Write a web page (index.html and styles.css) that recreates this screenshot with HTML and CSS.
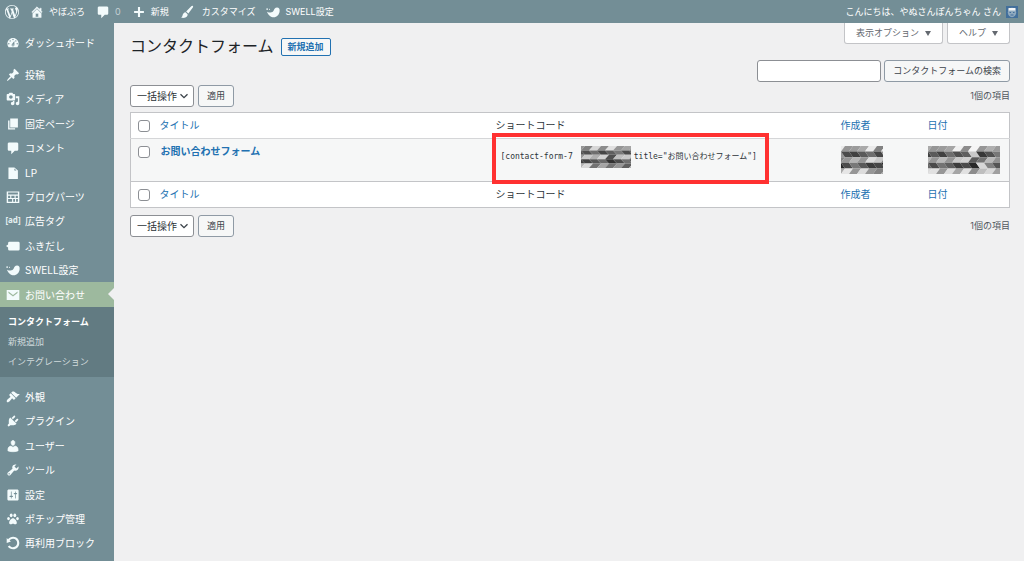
FILE: index.html
```html
<!DOCTYPE html>
<html lang="ja">
<head>
<meta charset="utf-8">
<title>コンタクトフォーム</title>
<link rel="stylesheet" href="styles.css">
</head>
<body>
<svg class="sprite" aria-hidden="true">
  <symbol id="i-wp" viewBox="0 0 20 20"><path d="M20 10c0-5.51-4.49-10-10-10C4.48 0 0 4.49 0 10c0 5.52 4.48 10 10 10 5.51 0 10-4.48 10-10zM7.78 15.37L4.37 6.22c.55-.02 1.17-.08 1.17-.08.5-.06.44-1.13-.06-1.11 0 0-1.45.11-2.37.11-.18 0-.37 0-.58-.01C4.12 2.69 6.87 1.11 10 1.11c2.33 0 4.45.87 6.05 2.34-.68-.11-1.65.39-1.65 1.58 0 .74.45 1.36.9 2.1.35.61.55 1.36.55 2.46 0 1.49-1.4 5-1.4 5l-3.03-8.37c.54-.02.82-.17.82-.17.5-.05.44-1.25-.06-1.22 0 0-1.44.12-2.38.12-.87 0-2.33-.12-2.33-.12-.5-.03-.56 1.2-.06 1.22l.92.08 1.26 3.41zM17.41 10c.24-.64.74-1.87.43-4.25.7 1.29 1.05 2.71 1.05 4.25 0 3.29-1.73 6.24-4.4 7.78.97-2.59 1.94-5.2 2.92-7.78zM6.1 18.09C3.12 16.65 1.11 13.53 1.11 10c0-1.3.23-2.48.72-3.59C3.25 10.3 4.67 14.2 6.1 18.09zm4.03-6.63l2.58 6.98c-.86.29-1.76.45-2.71.45-.79 0-1.57-.11-2.29-.33.81-2.38 1.62-4.74 2.42-7.1z"/></symbol>
  <symbol id="i-home" viewBox="0 0 20 20"><path d="M16 8.5l1.53 1.53-1.06 1.06L10 4.6l-6.47 6.49-1.06-1.06L10 2.5l4 4v-2h2v4zm-6-2.46l6 5.99V18H4v-5.97zM12 17v-5H8v5h4z" stroke="#f3fbfc" stroke-width=".6"/></symbol>
  <symbol id="i-comment" viewBox="0 0 20 20"><path d="M4.500 2h11c1.100 0 2 .9 2 2v8c0 1.100-.9 2-2 2h-3l-5 5v-5h-3c-1.100 0-2-.9-2-2V4c0-1.100.9-2 2-2z"/></symbol>
  <symbol id="i-plus" viewBox="0 0 20 20"><path d="M17 8.500v3h-5.500V17h-3v-5.500H3v-3h5.500V3h3v5.500z"/></symbol>
  <symbol id="i-brush" viewBox="0 0 20 20"><path d="M18.300 1.400c.7.600.5 1.500 0 2.300l-6.300 8.500-3.200-2.900 7.300-7.500c.7-.7 1.500-1 2.200-.4zM7.900 10.300l3 2.800c.2 2.300-1.500 4.600-4.300 5.200-1.900.4-3.700.2-5.100-.5 1.600-.7 1.900-1.700 2.300-3.400.5-2.100 2-3.800 4.100-4.100z"/></symbol>
  <symbol id="i-swell" viewBox="0 0 20 20"><path d="M1.500 9.500c4 2 8.500 1.500 9.500-1.500.7-2.500 2-4.500 4.800-4.500 2.700 0 4 2 3.700 5C19 14 15.500 17.500 11 17.500c-4 0-8-3.500-9.500-8z"/><circle cx="1.600" cy="5.800" r="1.200"/><circle cx="5" cy="6" r=".8"/></symbol>
  <symbol id="i-dash" viewBox="0 0 20 20"><path d="M3.760 16h12.480c1.100-1.370 1.760-3.110 1.760-5 0-4.420-3.580-8-8-8s-8 3.580-8 8c0 1.890.660 3.630 1.760 5zM10 4c.55 0 1 .45 1 1s-.45 1-1 1-1-.45-1-1 .45-1 1-1zM6 6c.55 0 1 .45 1 1s-.45 1-1 1-1-.45-1-1 .45-1 1-1zm8 0c.55 0 1 .45 1 1s-.45 1-1 1-1-.45-1-1 .45-1 1-1zm-5.370 5.550L12 7v6c0 1.100-.9 2-2 2s-2-.9-2-2c0-.57.24-1.080.63-1.450zM4 10c.55 0 1 .45 1 1s-.45 1-1 1-1-.45-1-1 .45-1 1-1zm12 0c.55 0 1 .45 1 1s-.45 1-1 1-1-.45-1-1 .45-1 1-1zm-5 3c0-.55-.45-1-1-1s-1 .45-1 1 .45 1 1 1 1-.45 1-1z"/></symbol>
  <symbol id="i-pin" viewBox="0 0 20 20"><path d="M10.44 3.02l1.82-1.82 6.36 6.35-1.83 1.82c-1.05-.68-2.48-.57-3.41.36l-.75.75c-.92.93-1.04 2.35-.35 3.41l-1.83 1.82-2.41-2.41-2.8 2.79c-.42.42-3.38 2.71-3.8 2.29s1.86-3.39 2.28-3.81l2.79-2.79L4.1 9.36l1.83-1.82c1.05.69 2.48.57 3.4-.36l.75-.75c.93-.92 1.05-2.35.36-3.41z"/></symbol>
  <symbol id="i-media" viewBox="0 0 20 20"><path d="M13 11V4c0-.55-.45-1-1-1h-1.670L9 1H5L3.670 3H2c-.55 0-1 .45-1 1v7c0 .55.45 1 1 1h10c.55 0 1-.45 1-1zM7 4.500c1.380 0 2.500 1.120 2.500 2.500S8.380 9.500 7 9.500 4.500 8.380 4.500 7 5.620 4.500 7 4.500zM14 6h5v10.500c0 1.380-1.120 2.500-2.500 2.500S14 17.880 14 16.500s1.120-2.500 2.500-2.500c.17 0 .34.020.5.050V9h-3V6zm-4 8.050V13h2v3.500c0 1.380-1.120 2.500-2.500 2.500S7 17.880 7 16.500 8.120 14 9.500 14c.17 0 .34.020.5.050z"/></symbol>
  <symbol id="i-page" viewBox="0 0 20 20"><path d="M6 15V2h11v13H6zm-1 1h8v2H3V5h2v11z"/></symbol>
  <symbol id="i-file" viewBox="0 0 20 20"><path d="M12 2l5 4.500V18.500H3.500V2H12zm0 4.500h3l-3-3v3z"/></symbol>
  <symbol id="i-parts" viewBox="0 0 20 20"><path fill-rule="evenodd" d="M1 2h18v16.500H1zM3 3.700v2.600h14V3.700zM3 8.300v3h3V8.300zm4.600 0v3h4.600v-3zm6.200 0v3H17v-3zM3 13v3.700h5.700V13zm7.300 0v3.700h2.600V13zm4.100 0v3.700H17V13z"/></symbol>
  <symbol id="i-balloon" viewBox="0 0 20 20"><path d="M5 4h12.500a2 2 0 0 1 2 2v8.500a2 2 0 0 1-2 2H5a2 2 0 0 1-2-2V12L0 10l3-2V6a2 2 0 0 1 2-2z"/></symbol>
  <symbol id="i-mail" viewBox="0 0 20 20"><path fill-rule="evenodd" d="M1 3h18v14H1zM3.500 5v2.200l6.500 5 6.500-5V5L10 10z"/></symbol>
  <symbol id="i-look" viewBox="0 0 20 20"><path d="M14.48 11.06L7.41 3.99l1.500-1.500c.5-.56 2.300-.47 3.510.32 1.210.8 1.430 1.280 2.910 2.100 1.180.64 2.450 1.260 4.450.85zm-.71.71L6.700 4.700 4.930 6.470c-.39.39-.39 1.020 0 1.410l1.060 1.060c.39.39.39 1.030 0 1.420-.6.6-1.430 1.110-2.210 1.690-.35.26-.7.53-1.010.84C1.430 14.230.4 16.080 1.400 17.070c.99 1 2.840-.03 4.180-1.360.31-.31.58-.66.85-1.020.57-.78 1.080-1.610 1.690-2.210.39-.39 1.020-.39 1.410 0l1.060 1.060c.39.39 1.020.39 1.410 0z"/></symbol>
  <symbol id="i-plug" viewBox="0 0 20 20"><path d="M13.110 4.360L9.870 7.600 8 5.730l3.240-3.240c.35-.34 1.050-.2 1.560.32.52.51.66 1.210.31 1.550zm-8 1.770l.91-1.120 9.010 9.010-1.190.84c-.71.71-2.630 1.160-3.820 1.160H6.140L4.900 17.260c-.59.59-1.540.59-2.120 0-.59-.58-.59-1.530 0-2.120l1.240-1.240v-3.880c0-1.130.4-3.190 1.090-3.890zm7.260 3.970l3.240-3.240c.34-.35 1.040-.21 1.550.31.52.51.66 1.210.31 1.550l-3.240 3.250z"/></symbol>
  <symbol id="i-user" viewBox="0 0 20 20"><path d="M10 9.250c-2.270 0-2.730-3.440-2.730-3.440C7 4.020 7.820 2 9.970 2c2.160 0 2.980 2.020 2.710 3.810 0 0-.41 3.440-2.680 3.440zm0 2.570L12.720 10c2.390 0 4.520 2.330 4.520 4.530v2.490s-3.650 1.130-7.240 1.130c-3.650 0-7.240-1.130-7.240-1.130v-2.490c0-2.250 1.940-4.480 4.470-4.480z" stroke="#f3fbfc" stroke-width=".8"/></symbol>
  <symbol id="i-tool" viewBox="0 0 20 20"><path d="M16.680 9.770c-1.340 1.340-3.300 1.670-4.950.99l-5.410 6.520c-.99.99-2.590.99-3.580 0s-.99-2.590 0-3.570l6.520-5.420c-.68-1.650-.35-3.610.99-4.950 1.280-1.280 3.120-1.620 4.720-1.060l-2.890 2.890 2.820 2.820 2.860-2.870c.53 1.580.18 3.390-1.080 4.650zM3.810 16.210c.4.39 1.040.39 1.430 0 .4-.4.4-1.040 0-1.430-.39-.4-1.030-.4-1.430 0-.39.39-.39 1.030 0 1.430z"/></symbol>
  <symbol id="i-set" viewBox="0 0 20 20"><path d="M18 16V4c0-1.100-.9-2-2-2H4c-1.100 0-2 .9-2 2v12c0 1.100.9 2 2 2h12c1.100 0 2-.9 2-2zM8 11h1c.55 0 1 .45 1 1s-.45 1-1 1H8v1.500c0 .28-.22.5-.5.5s-.5-.22-.5-.5V13H6c-.55 0-1-.45-1-1s.45-1 1-1h1V5.500c0-.28.22-.5.5-.5s.5.220.5.5V11zm5-2h-1c-.55 0-1-.45-1-1s.45-1 1-1h1V5.500c0-.28.22-.5.5-.5s.5.220.5.5V7h1c.55 0 1 .45 1 1s-.45 1-1 1h-1v5.500c0 .28-.22.5-.5.5s-.5-.22-.5-.5V9z"/></symbol>
  <symbol id="i-paw" viewBox="0 0 20 20"><ellipse cx="7.400" cy="4.800" rx="2" ry="2.700"/><ellipse cx="12.600" cy="4.800" rx="2" ry="2.700"/><ellipse cx="3.600" cy="9.400" rx="1.900" ry="2.400"/><ellipse cx="16.400" cy="9.400" rx="1.900" ry="2.400"/><path d="M10 9c2.500 0 5.500 3.600 5.500 6.200 0 1.600-1.200 2.300-2.500 2.300-1.200 0-1.900-.8-3-.8s-1.800.8-3 .8c-1.300 0-2.500-.7-2.500-2.300C4.500 12.600 7.500 9 10 9z"/></symbol>
  <symbol id="i-rotate" viewBox="0 0 20 20"><path d="M10.250 1.020c5.100 0 8.750 4.040 8.750 9s-3.650 9-8.750 9c-3.200 0-6.020-1.590-7.680-3.990l2.590-1.520c1.100 1.500 2.860 2.510 4.840 2.510 3.300 0 6-2.790 6-6s-2.700-6-6-6c-1.970 0-3.720 1-4.820 2.490L7 8.020l-6 2v-7L2.890 4.600c1.690-2.170 4.360-3.580 7.360-3.580z"/></symbol>
  <symbol id="i-chev" viewBox="0 0 10 10"><path d="M1.500 3.200L5 6.700l3.500-3.500" fill="none" stroke="#3c434a" stroke-width="1.300"/></symbol>
</svg>

<header class="adminbar">
  <a href="#" aria-label="WordPress"><svg class="icon"><use href="#i-wp"/></svg></a>
  <a href="#"><svg class="icon"><use href="#i-home"/></svg>やぼぶろ</a>
  <a href="#" class="dim"><svg class="icon"><use href="#i-comment"/></svg>0</a>
  <a href="#"><svg class="icon"><use href="#i-plus"/></svg>新規</a>
  <a href="#" class="wide"><svg class="icon"><use href="#i-brush"/></svg>カスタマイズ</a>
  <a href="#"><svg class="icon"><use href="#i-swell"/></svg>SWELL設定</a>
  <a href="#" class="account">こんにちは、やぬさんぽんちゃん さん
    <svg class="avatar" viewBox="0 0 12 12"><path fill="#426f9b" d="M0 0h12v12H0z"/><ellipse cx="6" cy="6.500" rx="4.200" ry="4.700" fill="#8fa9be"/><path fill="#f4f6f7" d="M2.500 2h7v2.500h-7z"/><path fill="#426f9b" d="M3.500 6h1.500v1H3.500zm3.500 0h1.500v1H7zM4.500 8.500h3v1h-3z"/></svg></a>
</header>

<div class="shell">
  <nav class="sidebar" aria-label="メインメニュー">
    <ul class="menu">
      <li><a href="#"><svg class="icon"><use href="#i-dash"/></svg>ダッシュボード</a></li>
    </ul>
    <ul class="menu">
      <li><a href="#"><svg class="icon"><use href="#i-pin"/></svg>投稿</a></li>
      <li><a href="#"><svg class="icon"><use href="#i-media"/></svg>メディア</a></li>
      <li><a href="#"><svg class="icon"><use href="#i-page"/></svg>固定ページ</a></li>
      <li><a href="#"><svg class="icon"><use href="#i-comment"/></svg>コメント</a></li>
      <li><a href="#"><svg class="icon"><use href="#i-file"/></svg>LP</a></li>
      <li><a href="#"><svg class="icon"><use href="#i-parts"/></svg>ブログパーツ</a></li>
      <li><a href="#"><span class="icon ad">[ad]</span>広告タグ</a></li>
      <li><a href="#"><svg class="icon"><use href="#i-balloon"/></svg>ふきだし</a></li>
      <li><a href="#"><svg class="icon"><use href="#i-swell"/></svg>SWELL設定</a></li>
      <li class="current"><a href="#"><svg class="icon"><use href="#i-mail"/></svg>お問い合わせ</a></li>
    </ul>
    <ul class="submenu">
      <li><a href="#" class="on">コンタクトフォーム</a></li>
      <li><a href="#">新規追加</a></li>
      <li><a href="#">インテグレーション</a></li>
    </ul>
    <ul class="menu">
      <li><a href="#"><svg class="icon"><use href="#i-look"/></svg>外観</a></li>
      <li><a href="#"><svg class="icon"><use href="#i-plug"/></svg>プラグイン</a></li>
      <li><a href="#"><svg class="icon"><use href="#i-user"/></svg>ユーザー</a></li>
      <li><a href="#"><svg class="icon"><use href="#i-tool"/></svg>ツール</a></li>
      <li><a href="#"><svg class="icon"><use href="#i-set"/></svg>設定</a></li>
      <li><a href="#"><svg class="icon"><use href="#i-paw"/></svg>ポチップ管理</a></li>
      <li><a href="#"><svg class="icon"><use href="#i-rotate"/></svg>再利用ブロック</a></li>
    </ul>
  </nav>

  <main class="content">
    <div class="head">
      <h1>コンタクトフォーム</h1>
      <a href="#" class="add">新規追加</a>
      <div class="tabs">
        <button type="button">表示オプション <span class="tri"></span></button>
        <button type="button">ヘルプ <span class="tri"></span></button>
      </div>
    </div>

    <form class="search">
      <input type="search" aria-label="コンタクトフォームの検索">
      <button type="button" class="btn">コンタクトフォームの検索</button>
    </form>

    <div class="tablenav">
      <span class="pick"><select aria-label="一括操作を選択"><option>一括操作</option></select><svg><use href="#i-chev"/></svg></span>
      <button type="button" class="btn">適用</button>
      <span class="count">1個の項目</span>
    </div>

    <table class="list">
      <colgroup><col class="c-check"><col><col class="c-code"><col class="c-author"><col class="c-date"></colgroup>
      <thead>
        <tr><td><input type="checkbox" aria-label="すべて選択"></td><th><a href="#">タイトル</a></th><th>ショートコード</th><th><a href="#">作成者</a></th><th><a href="#">日付</a></th></tr>
      </thead>
      <tbody>
        <tr>
          <td><input type="checkbox" aria-label="お問い合わせフォームを選択"></td>
          <td><a href="#" class="name">お問い合わせフォーム</a></td>
          <td><div class="shortcode"><code>[contact-form-7</code><svg class="mosaic" data-w="50" data-h="22" data-seed="2"></svg><code>title="お問い合わせフォーム"]</code></div></td>
          <td><svg class="mosaic" data-w="42" data-h="28" data-seed="0"></svg></td>
          <td><svg class="mosaic" data-w="72" data-h="28" data-seed="1"></svg></td>
        </tr>
      </tbody>
      <tfoot>
        <tr><td><input type="checkbox" aria-label="すべて選択"></td><th><a href="#">タイトル</a></th><th>ショートコード</th><th><a href="#">作成者</a></th><th><a href="#">日付</a></th></tr>
      </tfoot>
    </table>

    <div class="tablenav bottom">
      <span class="pick"><select aria-label="一括操作を選択"><option>一括操作</option></select><svg><use href="#i-chev"/></svg></span>
      <button type="button" class="btn">適用</button>
      <span class="count">1個の項目</span>
    </div>
  </main>
</div>
<script src="mosaic.js"></script>
</body>
</html>
```

FILE: styles.css
```css
* { box-sizing: border-box; }
body {
  margin: 0;
  min-height: 100vh;
  display: flex;
  flex-direction: column;
  background: #f0f0f1;
  color: #3c434a;
  font: 10px/16px Inter, "Noto Sans CJK JP", sans-serif;
}
a { color: #2271b1; text-decoration: none; }
ul { list-style: none; margin: 0; padding: 0; }
button, input, select { font: inherit; color: inherit; margin: 0; }
.sprite { display: none; }
.icon { width: 14px; height: 14px; flex: none; fill: #f3fbfc; }

.adminbar {
  display: flex;
  gap: 11px;
  height: 23px;
  padding: 0 6px 0 5px;
  background: #738e96;
  font-size: 9px;
}
.adminbar a { display: flex; align-items: center; gap: 5px; color: #fff; white-space: nowrap; }
.adminbar .dim { color: #c3d0d3; }
.adminbar .wide { gap: 8px; }
.adminbar .account { margin-left: auto; }
.avatar { width: 12px; height: 12px; }

.shell { flex: 1; display: flex; }
.sidebar {
  flex: none;
  width: 114px;
  padding: 8px 0;
  background: #738e96;
  display: flex;
  flex-direction: column;
  gap: 8px;
}
.menu { display: grid; grid-auto-rows: 24px 24px 25px 24px 25px; }
.menu li { display: grid; }
.menu a { display: flex; align-items: center; gap: 5px; padding-left: 6px; color: #fff; white-space: nowrap; }
.ad { font: 700 8px/12px "Noto Sans", sans-serif; color: #e4eef0; display: flex; justify-content: center; }
.menu .current { position: relative; background: #9db99e; }
.current::after {
  content: "";
  position: absolute;
  right: 0;
  top: 6px;
  border: 6px solid transparent;
  border-right-color: #f0f0f1;
  border-left-width: 0;
}
.submenu {
  margin-top: -8px;
  padding: 5px 0;
  background: #627b82;
  font-size: 9px;
  line-height: 20px;
}
.submenu a { display: block; padding-left: 8px; color: #d0dadc; }
.submenu .on { color: #fff; font-weight: 700; }

.content { flex: 1; min-width: 0; padding: 0 14px 0 16px; }
.head { display: flex; align-items: flex-start; height: 37px; }
h1 { margin: 0 7px 0 0; padding-top: 11px; font-size: 16px; line-height: 24px; font-weight: 400; color: #1d2327; }
.add {
  margin-top: 15px;
  padding: 0 6px;
  border: 1px solid #2271b1;
  border-radius: 2px;
  background: #f6f7f7;
  font-size: 9px;
  line-height: 16px;
  font-weight: 700;
}
.tabs { display: flex; gap: 4px; margin-left: auto; }
.tabs button {
  display: flex;
  align-items: center;
  gap: 6px;
  height: 21px;
  padding: 0 11px;
  border: 1px solid #c3c4c7;
  border-top: 0;
  border-radius: 0 0 3px 3px;
  background: #fff;
  color: #646970;
  font-size: 9px;
}
.tri { border: 3px solid transparent; border-top: 5px solid #646970; border-bottom: 0; }

.search { display: flex; justify-content: flex-end; gap: 3px; }
.search input { width: 124px; height: 22px; border: 1px solid #8c8f94; border-radius: 3px; background: #fff; padding: 0 6px; }
.btn {
  height: 22px;
  padding: 0 8px;
  border: 1px solid #8f9aa5;
  border-radius: 3px;
  background: #f6f7f7;
  color: #3c434a;
  font-size: 9px;
  line-height: 20px;
}
.tablenav { display: flex; align-items: center; gap: 4px; margin: 3px 0 5px; font-size: 9px; }
.tablenav.bottom { margin: 7px 0 0; }
.count { margin-left: auto; color: #50575e; }
.pick { position: relative; display: flex; }
.pick select {
  appearance: none;
  width: 64px;
  height: 22px;
  padding: 0 0 0 6px;
  border: 1px solid #8c8f94;
  border-radius: 3px;
  background: #fff;
  color: #2c3338;
  font-size: 10px;
}
.pick svg { position: absolute; right: 5px; top: 6px; width: 10px; height: 10px; pointer-events: none; }

.list {
  width: 100%;
  table-layout: fixed;
  border-collapse: collapse;
  border: 1px solid #c3c4c7;
  background: #fff;
}
.c-check { width: 29px; }
.c-code { width: 345px; }
.c-author { width: 87px; }
.c-date { width: 82px; }
.list th, .list td { padding: 0; text-align: left; font-weight: 400; vertical-align: middle; color: #2c3338; }
.list th { padding-bottom: 2px; }
.list thead tr, .list tfoot tr { height: 26px; }
.list tbody tr { height: 43px; border-top: 1px solid #d5d6d8; border-bottom: 1px solid #c3c4c7; background: #f6f7f7; }
.list tbody td { padding-top: 7px; vertical-align: top; }
.list tbody td:nth-child(2) { padding: 4px 0 0 1px; }
.list input {
  appearance: none;
  display: block;
  width: 12px;
  height: 12px;
  margin-left: 7px;
  border: 1px solid #8c8f94;
  border-radius: 3px;
  background: #fff;
}
.name { font-weight: 700; }
.mosaic { display: block; flex: none; }
.shortcode { position: relative; display: inline-flex; align-items: center; margin-left: 5px; white-space: nowrap; }
.shortcode code { font: 8px/16px "DejaVu Sans Mono", "Noto Sans CJK JP", monospace; }
.shortcode .mosaic { margin: 0 3px 0 8px; }
.shortcode::after { content: ""; position: absolute; inset: -13px -12px -16px -9px; border: 4px solid #ff3131; }
```

FILE: mosaic.js
```js
// Fills each .mosaic with rows of slanted grey tiles that hide private values.
const patterns = [
  [
    [150, 155, 170, 235, 130, 235],
    [75, 65, 90, 110, 70, 150],
    [150, 180, 150, 220, 200, 130],
    [75, 120, 90, 60, 70, 40],
    [230, 150, 220, 150, 130, 170]
  ],
  [
    [150, 155, 165, 240, 140, 245, 150, 175, 155, 170],
    [90, 65, 110, 80, 95, 200, 55, 80, 120, 65],
    [150, 185, 150, 200, 210, 90, 115, 185, 145, 180],
    [75, 115, 95, 60, 75, 40, 215, 130, 85, 105],
    [225, 150, 220, 165, 225, 140, 190, 215, 160, 220]
  ],
  [
    [130, 215, 140, 225, 150, 165, 150],
    [80, 110, 70, 95, 120, 75, 85],
    [200, 175, 210, 80, 190, 200, 150],
    [65, 85, 105, 50, 75, 110, 65],
    [215, 115, 165, 115, 150, 95, 180]
  ]
];
document.querySelectorAll(".mosaic").forEach((svg) => {
  const w = +svg.dataset.w, h = +svg.dataset.h;
  const rows = patterns[+svg.dataset.seed];
  const step = 8, lean = 4, rh = h / rows.length;
  svg.setAttribute("width", w);
  svg.setAttribute("height", h);
  rows.forEach((row, r) => {
    const top = r * rh, bottom = top + rh;
    const a = r % 2 ? 0 : lean, b = lean - a;
    for (let c = -1; c <= row.length; c++) {
      const g = row[(c + row.length) % row.length], x = c * step;
      const p = document.createElementNS("http://www.w3.org/2000/svg", "polygon");
      p.setAttribute("points", `${x + a},${top} ${x + step + a},${top} ${x + step + b},${bottom} ${x + b},${bottom}`);
      p.setAttribute("fill", `rgb(${g},${g},${g})`);
      svg.appendChild(p);
    }
  });
});
```
